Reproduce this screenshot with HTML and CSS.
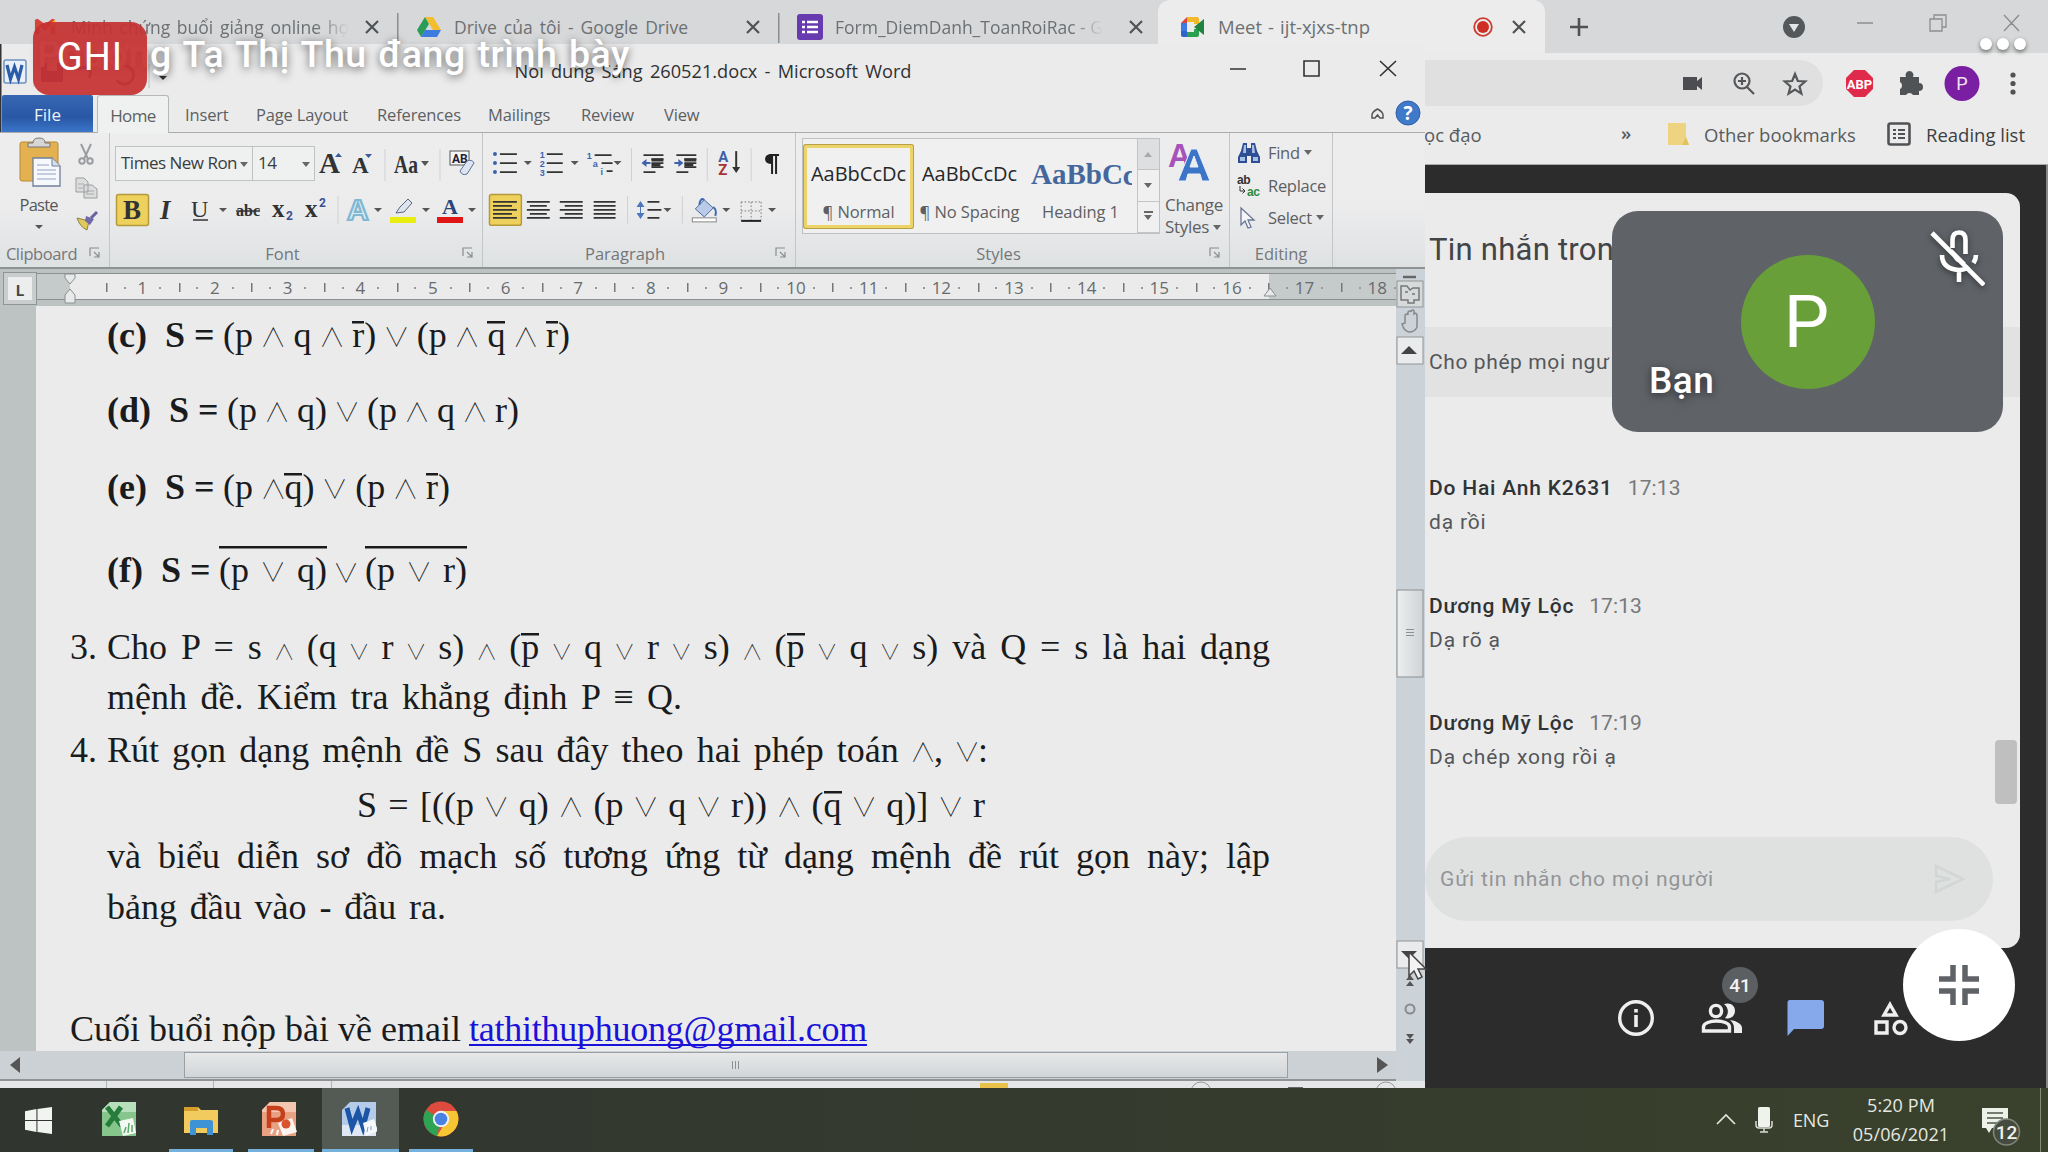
FILE: index.html
```html
<!DOCTYPE html>
<html lang="vi">
<head>
<meta charset="utf-8">
<title>Meet</title>
<link rel="stylesheet" href="styles.css">
</head>
<body>
<div class="desktop">

<section class="chrome">
  <header class="tabs">
    <div class="tab t1">
      <svg class="fav" viewBox="0 0 24 24"><path d="M1 4v16h5V11l6 5 6-5v9h5V4l-3-1-8 6-8-6z" fill="#d5453a"/><path d="M18 8l5-4v5l-5 4z" fill="#f4b92a"/></svg>
      <span class="j w278 fade">Minh chứng buổi giảng online họ</span>
      <svg class="x" viewBox="0 0 14 14"><path d="M1 1l12 12M13 1L1 13"/></svg>
    </div>
    <div class="tab t2">
      <svg class="fav" viewBox="0 0 24 22"><path d="M8 1h8l8 13h-8z" fill="#f3bd2d"/><path d="M8 1l4 7-8 13-4-7z" fill="#2b9b58"/><path d="M8 14h16l-4 7H4z" fill="#3d7be0"/></svg>
      <span class="j w234">Drive của tôi - Google Drive</span>
      <svg class="x" viewBox="0 0 14 14"><path d="M1 1l12 12M13 1L1 13"/></svg>
    </div>
    <div class="tab t3">
      <svg class="fav form" viewBox="0 0 26 26"><rect width="26" height="26" rx="3" fill="#673ab0"/><path d="M10 8h11M10 13h11M10 18h11M5 8h3M5 13h3M5 18h3" stroke="#fff" stroke-width="2.6"/></svg>
      <span class="j w276 fade">Form_DiemDanh_ToanRoiRac - G</span>
      <svg class="x" viewBox="0 0 14 14"><path d="M1 1l12 12M13 1L1 13"/></svg>
    </div>
    <div class="tab active">
      <svg class="fav" viewBox="0 0 24 20"><path d="M0 6l6-6v6z" fill="#dc4437"/><path d="M0 6h6v9H0z" fill="#3d7be0"/><path d="M0 14h6v6H2q-2 0-2-2z" fill="#2f64c8"/><path d="M6 0h10q2 0 2 2v5h-5V5H6z" fill="#f2b92a"/><path d="M6 15h7v-3h5v6q0 2-2 2H6z" fill="#2ba04e"/><path d="M13 10l10-8v16z" fill="#1e8440"/></svg>
      <span class="j w152">Meet - ijt-xjxs-tnp</span>
      <svg class="rec" viewBox="0 0 20 20"><circle cx="10" cy="10" r="8.8" fill="none" stroke="#cf3a31" stroke-width="1.8"/><circle cx="10" cy="10" r="6" fill="#cf2e25"/></svg>
      <svg class="x" viewBox="0 0 14 14"><path d="M1 1l12 12M13 1L1 13"/></svg>
    </div>
    <svg class="winctl" viewBox="1545 0 503 53">
      <path d="M1570 27h18M1579 18v18" stroke="#505254" stroke-width="2.6"/>
      <circle cx="1794" cy="27" r="11" fill="#54585a"/><path d="M1789 24h10l-5 8z" fill="#e4e6e6"/>
      <g fill="none" stroke="#8b8e90" stroke-width="1.3"><path d="M1857 23h16M2004 15l15 16M2019 15l-15 16M1930 19h12v12h-12zM1934 19v-4h12v12h-4"/></g>
    </svg>
  </header>
  <div class="toolbar">
    <div class="omni">
      <svg viewBox="1675 60 148 46" width="148" height="46"><path d="M1683 77h14v4l5-4v13l-5-4v4h-14z" fill="#4b4d50"/><g fill="none" stroke="#55585a" stroke-width="2.2"><circle cx="1742" cy="81" r="7.5"/><path d="M1747 87l7 7M1738 81h8M1742 77v8M1795 74l2.8 7 7.4.5-5.7 4.8 1.9 7.3-6.4-4-6.4 4 1.9-7.3-5.7-4.8 7.4-.5z"/></g></svg>
    </div>
    <svg class="ext" viewBox="1823 60 225 46"><path d="M1854 70h11l8 8v11l-8 8h-11l-8-8V78z" fill="#e02a4c"/><text x="1859.500" y="88.500" class="abp" text-anchor="middle">ABP</text>
      <path d="M1900 77h6a4 4 0 1 1 7 0h6v6a4 4 0 1 1 0 8v4h-6a4 4 0 0 0-7 0h-6v-6a4 4 0 0 0 0-7z" fill="#505356"/>
      <circle cx="1962" cy="83.500" r="17.500" fill="#7b1fa2"/><text x="1962" y="90" class="av" text-anchor="middle">P</text>
      <g fill="#505356"><circle cx="2013" cy="75" r="2.600"/><circle cx="2013" cy="83.500" r="2.600"/><circle cx="2013" cy="92" r="2.600"/></g></svg>
  </div>
  <div class="bookmarks">
    <span class="j w56">ọc đạo</span><b class="more">»</b><i></i>
    <svg width="22" height="24" viewBox="0 0 22 24"><path d="M1 1h18v14l3 8H1z" fill="#eed481"/><path d="M19 15l3 8h-7z" fill="#e2c25c"/></svg>
    <span class="j w147">Other bookmarks</span><i></i>
    <svg width="24" height="24" viewBox="0 0 24 24"><rect x="1.500" y="1.500" width="21" height="21" rx="2" fill="none" stroke="#505356" stroke-width="2.600"/><path d="M6 8h3M6 12h3M6 16h3M11 8h7M11 12h7M11 16h7" stroke="#505356" stroke-width="2"/></svg>
    <span class="j w98 dark">Reading list</span>
  </div>
  <div class="meet">
    <aside class="chat">
      <h2>Tin nhắn tron</h2>
      <div class="allow">Cho phép mọi ngư</div>
      <div class="msgs">
        <article><p><b>Do Hai Anh K2631</b><time>17:13</time></p><p>dạ rồi</p></article>
        <article><p><b>Dương Mỹ Lộc</b><time>17:13</time></p><p>Dạ rõ ạ</p></article>
        <article><p><b>Dương Mỹ Lộc</b><time>17:19</time></p><p>Dạ chép xong rồi ạ</p></article>
        <div class="thumb"></div>
      </div>
      <div class="send"><span>Gửi tin nhắn cho mọi người</span>
        <svg width="32" height="30" viewBox="0 0 32 30"><path d="M2 2l27 13L2 28V18l14-3-14-3z" fill="none" stroke="#d3d6d6" stroke-width="2.500"/></svg></div>
    </aside>
    <footer class="actions">
      <svg viewBox="1425 960 560 100" width="560" height="100">
        <circle cx="1636" cy="1018" r="16.300" fill="none" stroke="#efefef" stroke-width="3.400"/><path d="M1636 1015v12M1636 1009v3.500" stroke="#efefef" stroke-width="3.600"/>
        <g fill="none" stroke="#efefef" stroke-width="3.400"><circle cx="1716" cy="1011" r="5.600"/><path d="M1703.500 1031v-4c0-4 7-6 13-6s13 2 13 6v4z"/></g><path d="M1724 1004c7-2 11 2 11 7s-5 9-10 7c4-4 4-10-1-14zM1730 1020c7 1 12 4 12 8v5h-8v-5c0-4-2-6-4-8z" fill="#efefef"/>
        <circle cx="1740" cy="985" r="18" fill="#5c5f61"/><text x="1740" y="992" class="cnt" text-anchor="middle">41</text>
        <path d="M1790 1000h31q3 0 3 3v23q0 3-3 3h-27l-6.500 7v-33q0-3 2.500-3z" fill="#85a9ea"/>
        <g fill="none" stroke="#efefef" stroke-width="3.400"><path d="M1890 1004.500l6 10.500h-12zM1876 1022h11v11h-11z"/><circle cx="1900" cy="1027.500" r="6"/></g>
      </svg>
    </footer>
  </div>
</section>

<section class="word">
  <header class="title">
    <svg viewBox="0 44 514 51" width="514" height="51">
      <rect x="4" y="60" width="22" height="23" rx="2" fill="#e9f0f8" stroke="#6d91c0" stroke-width="1.500"/><path d="M7 65l3.500 14 4-12 4 12L22 65" fill="none" stroke="#2a5ca8" stroke-width="3.200"/>
      <path d="M34 60v27M149 64v24" stroke="#b9bcbf"/><path d="M41 63h22v19H41zM47 63v8h10v-8" fill="#4c3f7d"/><path d="M78 70c6-6 16-1 11 8M125 66a9 9 0 1 1-8 14" fill="none" stroke="#51609a" stroke-width="3"/><path d="M159 76h8l-4 4z" fill="#333"/>
    </svg>
    <h1 class="j w397">Noi dung Sáng 260521.docx - Microsoft Word</h1>
    <svg class="ctl" viewBox="1216 44 209 51" width="209" height="51"><path d="M1230 69h16M1304 61h15v15h-15zM1380 61l16 15M1396 61l-16 15" fill="none" stroke="#333" stroke-width="1.600"/></svg>
  </header>
  <nav class="menu">
    <b>File</b><span class="home">Home</span><span>Insert</span><span>Page Layout</span><span>References</span><span>Mailings</span><span>Review</span><span>View</span>
    <svg viewBox="1365 95 60 38" width="60" height="38"><path d="M1372 115q0-3 5.500-6 5.500 3 5.500 6v3h-3l-2.500-3-2.500 3h-3z" fill="none" stroke="#555" stroke-width="1.500"/><circle cx="1408" cy="113" r="12" fill="#3f79c9" stroke="#2d5fa8"/><text x="1408" y="120" class="q" text-anchor="middle">?</text></svg>
  </nav>
  <div class="ribbon">
    <div class="grp clip">
      <svg class="tools" viewBox="0 134 109 104"><rect x="20" y="143" width="38" height="39" rx="2" fill="#e3b150" stroke="#b98a35"/><path d="M28 148v-4h5q0-5 6-5t6 5h5v4z" fill="#d6d6d6" stroke="#777"/><path d="M33 159h19l8 8v20H33z" fill="#f6f8fb" stroke="#6f7f9c" stroke-width="1.300"/><path d="M37 166h12M37 171h19M37 175h19M37 180h19" stroke="#91a3c4"/><path d="M52 159v8h8" fill="#d5dfee" stroke="#6f7f9c"/>
        <g fill="none" stroke="#9a9da0" stroke-width="2"><path d="M81 145l7 15M91 145l-7 15"/><circle cx="82" cy="162" r="2.700"/><circle cx="90" cy="162" r="2.700"/></g>
        <path d="M76 179h8l4 4v10H76zM84 186h8l5 4v9H84z" fill="#dcdddd" stroke="#9a9da0"/><path d="M78 185h6M78 189h5M86 192h8M86 195h8" stroke="#aaa"/>
        <path d="M77 219l12 3-2 9q-7-3-10-12z" fill="#dfc95c" stroke="#8d8243"/><path d="M86 217l8 3-4 6-5-4z" fill="#706aa8"/><path d="M91 219l6-6" stroke="#69639a" stroke-width="3"/>
        <text x="39" y="212" class="ui" text-anchor="middle" textLength="39">Paste</text><path d="M35 226h8l-4 4z" fill="#555"/></svg>
      <label>Clipboard<svg viewBox="0 0 12 12"><path d="M1 9V1h9M5 5l5 5M10 5v5H5"/></svg></label>
    </div>
    <div class="grp font">
      <div class="row r1">
        <div class="combo name">Times New Ron<i></i></div><div class="combo size">14<i></i></div>
        <svg viewBox="315 145 167 38" width="167" height="38"><g class="sf"><text x="319" y="173" font-size="29">A</text><text x="352" y="173" font-size="23">A</text><text x="394" y="173" font-size="25" textLength="24" lengthAdjust="spacingAndGlyphs">Aa</text></g><path d="M335 157h7l-3.500-4zM365 154h7l-3.500 4z" fill="#3b5a9a"/><path d="M421 161h8l-4 5z" fill="#555"/><path d="M385 149v32M440 149v32" stroke="#cfd1d3"/><rect x="450" y="151" width="19" height="14" fill="#f5f6f8" stroke="#555"/><text x="452" y="163" font-size="12" font-family="Roboto" font-weight="700" fill="#223">AB</text><path d="M460 171l7-10q5-2 7 2l-7 11q-5 2-7-3z" fill="#dde5f1" stroke="#5a6f98"/></svg>
      </div>
      <svg class="r2" viewBox="109 189 373 44"><rect x="115.500" y="194.500" width="32" height="31" rx="2" fill="#eed15c" stroke="#b59a3d" stroke-width="1.500"/>
        <g class="sf"><text x="122" y="219" font-size="27">B</text><text x="159" y="219" font-size="27" font-style="italic">I</text><text x="190" y="217" font-size="24" font-weight="400">U</text><text x="235" y="216" font-size="17" textLength="24" lengthAdjust="spacingAndGlyphs">abc</text><text x="271" y="217" font-size="25">x</text><text x="304" y="217" font-size="25">x</text></g><path d="M192 220h15M235 211h24" stroke="#333" stroke-width="1.600"/>
        <g font-family="Roboto" font-size="12" font-weight="700" fill="#37508f"><text x="285" y="220">2</text><text x="318" y="207">2</text></g>
        <path d="M218 208h8l-4 4zM373 208h8l-4 4zM421 208h8l-4 4zM467 208h8l-4 4z" fill="#555"/><path d="M337 196v28" stroke="#cfd1d3"/>
        <text x="346" y="220" font-size="30" font-family="Liberation Sans" font-weight="700" fill="#dcecf4" stroke="#7fb8d2" stroke-width="2.200">A</text>
        <path d="M395 213l4-6 8-8 4 4-8 9z" fill="#dfe4ec" stroke="#55648a"/><rect x="389" y="217" width="26" height="6" fill="#e9ee10"/><text x="441" y="214" font-size="22" font-family="Liberation Serif" font-weight="700" fill="#2c4579">A</text><rect x="436" y="217" width="26" height="6" fill="#e01515"/></svg>
      <label>Font<svg viewBox="0 0 12 12"><path d="M1 9V1h9M5 5l5 5M10 5v5H5"/></svg></label>
    </div>
    <div class="grp para">
      <svg class="tools" viewBox="483 133 313 104">
        <g stroke="#333" stroke-width="1.700" fill="none"><path d="M500 154h17M500 163h17M500 172h17M547 154h16M547 163h16M547 172h16M595 155h17M602 163h11M607 171h6"/><path d="M644 155h20M652 159h12M652 163h12M652 167h12M644 172h12M677 155h20M685 159h12M685 163h12M685 167h12M677 172h12" /><path d="M652 160h12M652 165h9M685 160h12M685 165h9" stroke-width="3"/></g>
        <g fill="#3d62ad"><circle cx="495" cy="154" r="2"/><circle cx="495" cy="163" r="2"/><circle cx="495" cy="172" r="2"/><path d="M642 163l5-4v3h4v2h-4v3zM684 163l-5-4v3h-4v2h4v3z"/></g>
        <g class="num"><text x="540" y="158">1</text><text x="540" y="167">2</text><text x="540" y="176">3</text><text x="587" y="159">1</text><text x="593" y="167">a</text><text x="601" y="175">i</text></g>
        <path d="M524 161h8l-4 4zM571 161h8l-4 4zM614 161h8l-4 4zM664 208h8l-4 4zM723 208h8l-4 4zM769 208h8l-4 4z" fill="#555"/>
        <path d="M632 148v33M708 148v33M752 148v33M628 196v28M683 196v28" stroke="#cfd1d3"/>
        <g font-family="Roboto" font-weight="700" font-size="15"><text x="719" y="162" fill="#3d5fa8">A</text><text x="719" y="175" fill="#a83232">Z</text></g><path d="M737 151v18" stroke="#333" stroke-width="2"/><path d="M733 167h8l-4 6z" fill="#333"/>
        <path d="M772 154h8v2h-2v18h-2v-18h-2v18h-2v-10c-8 0-8-10 0-10z" fill="#222"/>
        <rect x="489.500" y="194.500" width="32" height="31" rx="2" fill="#eed15c" stroke="#b59a3d" stroke-width="1.500"/>
        <path d="M493 202h24M493 206h19M493 210h24M493 214h19M493 218h24M527 202h23M530 206h17M527 210h23M530 214h17M527 218h23M560 202h23M565 206h18M560 210h23M565 214h18M560 218h23M594 202h22M594 206h22M594 210h22M594 214h22M594 218h22M648 202h12M648 210h14M648 218h12" stroke="#333" stroke-width="1.700"/>
        <path d="M637 207l4-6 4 6zM637 213l4 6 4-6z" fill="#4d77bd"/><path d="M641 205v11" stroke="#4d77bd"/>
        <path d="M696 209l9-9 9 8-9 9z" fill="#b9cbe6" stroke="#4c6b9f"/><path d="M700 205q1-8 5-5M714 207q4 3 2 9" fill="none" stroke="#3f6aae" stroke-width="2"/><rect x="693" y="218" width="24" height="4" fill="#fff" stroke="#888"/>
        <path d="M742 202h20M742 211h20M742 202v18M752 202v18M762 202v18" stroke="#777" stroke-dasharray="1.500 2"/><path d="M742 221h20" stroke="#222" stroke-width="2"/>
      </svg>
      <label>Paragraph<svg viewBox="0 0 12 12"><path d="M1 9V1h9M5 5l5 5M10 5v5H5"/></svg></label>
    </div>
    <div class="grp styles">
      <div class="row r0">
        <div class="gallery">
          <div class="st on"><em>AaBbCcDc</em><span>¶ Normal</span></div>
          <div class="st"><em>AaBbCcDc</em><span>¶ No Spacing</span></div>
          <div class="st hd"><em>AaBbC<small>c</small></em><span>Heading 1</span></div>
          <div class="gs"><i class="dis"></i><i></i><i class="bar"></i></div>
        </div>
        <div class="change">
          <svg viewBox="1168 140 48 46" width="48" height="46"><g font-family="Liberation Sans" font-weight="700"><text x="1171" y="168" font-size="34" fill="#a752b8" textLength="23" lengthAdjust="spacingAndGlyphs">A</text><path d="M1181 182l13-32h6l13 32h-8l-2-7h-12l-2 7zM1193 168h8l-4-11z" fill="#3c74c8" stroke="#eaf0fa" fill-rule="evenodd"/></g></svg>
          <span>Change</span><span>Styles<i></i></span>
        </div>
      </div>
      <label>Styles<svg viewBox="0 0 12 12"><path d="M1 9V1h9M5 5l5 5M10 5v5H5"/></svg></label>
    </div>
    <div class="grp edit">
      <ul>
        <li><svg viewBox="0 0 26 24"><path d="M7 2h4v5h4V2h4l2 8 3 6v6h-9v-7h-4v7H2v-6l3-6z" fill="#2e4f93"/><path d="M4 16h5v4H4zM17 16h5v4h-5zM8 4h2v8H7zM16 4h2l1 8h-3z" fill="#a9c0e6"/></svg>Find<i></i></li>
        <li><svg viewBox="0 0 26 24"><text x="1" y="10" class="rp" fill="#333">ab</text><text x="11" y="22" class="rp" fill="#2e8b40">ac</text><path d="M4 12v5h5M6.500 14.500L9 17l-2.500 2.500" fill="none" stroke="#333"/></svg>Replace</li>
        <li><svg viewBox="0 0 26 24"><path d="M5 2v17l4-4 3 7 3-1-3-7h6z" fill="#f4f6fa" stroke="#6a7896" stroke-width="1.300"/></svg>Select<i></i></li>
      </ul>
      <label>Editing</label>
    </div>
  </div>
  <div class="work">
    <div class="left">
      <div class="ruler">
        <div class="tabsel">L</div>
        <div class="scale"><div class="nums"><span>1</span><span>2</span><span>3</span><span>4</span><span>5</span><span>6</span><span>7</span><span>8</span><span>9</span><span>10</span><span>11</span><span>12</span><span>13</span><span>14</span><span>15</span><span>16</span><span>17</span><span>18</span></div>
        <svg class="marks" viewBox="0 268 1396 38"><path d="M65 275h10v4l-5 6-5-6zM65 296l5-6 5 6v8H65zM1264 297l6-8 6 8z" fill="#e8e9e9" stroke="#8b8f90"/></svg></div>
      </div>
      <main class="doc"><div class="page">
        <p class="l1 eq"><b class="lab">(c)</b><b class="j sx">S =</b><span class="j f1">(p <u>∧</u> q <u>∧</u> <s>r</s>) <u>∨</u> (p <u>∧</u> <s>q</s> <u>∧</u> <s>r</s>)</span></p>
        <p class="l2 eq"><b class="lab">(d)</b><b class="j sx">S =</b><span class="j f2">(p <u>∧</u> q) <u>∨</u> (p <u>∧</u> q <u>∧</u> r)</span></p>
        <p class="l3 eq"><b class="lab">(e)</b><b class="j sx">S =</b><span class="j f3">(p <u>∧</u><s>q</s>) <u>∨</u> (p <u>∧</u> <s>r</s>)</span></p>
        <p class="l4 eq"><b class="lab">(f)</b><b class="j sx">S =</b><span class="j f4a big">(p <u>∨</u> q)</span><u>∨</u><span class="j f4b big">(p <u>∨</u> r)</span></p>
        <p class="l5 it"><span class="no">3.</span><span class="j full sm">Cho P = s <u>∧</u> (q <u>∨</u> r <u>∨</u> s) <u>∧</u> (<s>p</s> <u>∨</u> q <u>∨</u> r <u>∨</u> s) <u>∧</u> (<s>p</s> <u>∨</u> q <u>∨</u> s) và Q = s là hai dạng</span></p>
        <p class="l6 in j">mệnh đề. Kiểm tra khẳng định P ≡ Q.</p>
        <p class="l7 it"><span class="no">4.</span><span class="j f7">Rút gọn dạng mệnh đề S sau đây theo hai phép toán <u>∧</u>, <u>∨</u>:</span></p>
        <p class="l8 j">S = [((p <u>∨</u> q) <u>∧</u> (p <u>∨</u> q <u>∨</u> r)) <u>∧</u> (<s>q</s> <u>∨</u> q)] <u>∨</u> r</p>
        <p class="l9 in j full">và biểu diễn sơ đồ mạch số tương ứng từ dạng mệnh đề rút gọn này; lập</p>
        <p class="l10 in j">bảng đầu vào - đầu ra.</p>
        <p class="l11"><span class="j f11">Cuối buổi nộp bài về email</span><a>tathithuphuong@gmail.com</a></p>
      </div></main>
      <div class="hscroll"><i class="la"></i><div class="ht"><i></i></div><i class="ra"></i></div>
    </div>
    <svg class="vscroll" viewBox="1396 268 29 813" width="29" height="813"><defs><linearGradient id="tg"><stop offset="0" stop-color="#eceeef"/><stop offset="1" stop-color="#d0d4d7"/></linearGradient></defs>
      <path d="M1403 276h13" stroke="#666" stroke-width="2.500"/><rect x="1397" y="280" width="26" height="26" fill="#d6dada" stroke="#8f9495"/><path d="M1401 285h6l3 4 3-2h6v12h-5v3h-6v-3h-7zM1405 291h3M1412 293h3" fill="none" stroke="#777" stroke-width="1.500"/>
      <path d="M1402 323l3-1v-8q2-2 3 0v-3q2-2 3 0v-1q2-2 3 0v3q2-2 3 1v12q-2 5-8 5-5-1-7-8z" fill="none" stroke="#888" stroke-width="1.500"/>
      <rect x="1397" y="336" width="26" height="27" fill="#eaebec" stroke="#8f9495"/><path d="M1401 353h16l-8-8z" fill="#444"/>
      <rect x="1397" y="589" width="26" height="87" fill="url(#tg)" stroke="#8b9092"/><path d="M1406 628.500h8M1406 631.500h8M1406 634.500h8" stroke="#8b9092"/>
      <rect x="1397" y="940" width="26" height="27" fill="#eaebec" stroke="#8f9495"/><path d="M1401 950h16l-8 8z" fill="#444"/>
      <path d="M1406 979l4-5 4 5zM1406 985l4-5 4 5zM1406 1033h8l-4 5zM1406 1038h8l-4 5z" fill="#555"/><circle cx="1410" cy="1008" r="4.500" fill="none" stroke="#858a8c" stroke-width="2"/></svg>
  </div>
  <div class="status"><i></i><i></i><i></i><svg viewBox="332 1081 1093 7"><rect x="980" y="1083" width="28" height="6" fill="#e8c24a"/><rect x="1288" y="1087" width="15" height="2" fill="#666"/><g fill="none" stroke="#999"><circle cx="1201" cy="1092" r="10"/><circle cx="1386" cy="1092" r="10"/></g></svg></div>
</section>

<footer class="taskbar">
  <div class="app start"><svg viewBox="0 0 26 26"><path d="M0 4l11-2v10.500H0zM12 2l14-2v12.500H12zM0 13.500h11V24L0 22zM12 13.500h14V26l-14-2z" fill="#f2f4f1"/></svg></div>
  <div class="app a1"><svg viewBox="0 0 36 36"><path d="M9 1h26v34H1V9z" fill="#86c68d"/><path d="M9 1h26v10H1V9z" fill="#b8dfbb"/><path d="M6 6l15 19M20 6L6 25" stroke="#257c3b" stroke-width="5"/><path d="M18 20l14-3 3 15-13 3z" fill="#f4f8f3"/><path d="M23 32l2-6M27 32l1-10M31 31v-7" stroke="#5da868" stroke-width="1.500"/></svg></div>
  <div class="app a2 run"><svg viewBox="0 0 36 36"><path d="M1 6h14l3 3h17v23H1z" fill="#f1cb5d"/><path d="M1 6h14v4H1z" fill="#d49d2c"/><path d="M7 21q0-2 2-2h18q3 0 3 2v13h-6v-7H13v7H7z" fill="#3e93d6"/></svg></div>
  <div class="app a3 run"><svg viewBox="0 0 36 36"><path d="M9 1h26v34H1V9z" fill="#e9a184"/><path d="M9 1h26v10H1V9z" fill="#f2c6b1"/><path d="M8 27V7h7q7 0 7 6t-7 6h-6" fill="none" stroke="#c5401b" stroke-width="4.500"/><path d="M17 22l14-5 5 14-14 4z" fill="#fbf3ef"/><circle cx="25" cy="23" r="4.500" fill="#d9532c"/><path d="M10 33l2-5M16 34l1-5M22 33l1-3" stroke="#fff" stroke-width="2"/></svg></div>
  <div class="app a4 run on"><svg viewBox="0 0 36 36"><path d="M9 1h26v34H1V9z" fill="#b4cbea"/><path d="M1 24h34v11H1z" fill="#dfe8f4"/><path d="M6 7l5 19 6-15 5 15 5-19" fill="none" stroke="#1d55a6" stroke-width="5"/><path d="M22 22l11-4 4 12-12 5z" fill="#f6f9fc"/><path d="M26 31l1-5M30 29v-4" stroke="#7c9cc9"/></svg></div>
  <div class="app a5 run"><svg viewBox="0 0 36 36"><circle cx="18" cy="18" r="17.500" fill="#dd4b3e"/><path d="M18 18L3 9a17.500 17.500 0 0 0 11 26z" fill="#2ea353"/><path d="M18 35.500A17.500 17.500 0 0 0 33.500 10H18l4 12-8 13z" fill="#f6c733"/><circle cx="18" cy="18" r="8.200" fill="#f4f4f4"/><circle cx="18" cy="18" r="6.300" fill="#4a82e4"/></svg></div>
  <div class="tray">
    <svg viewBox="1710 1088 70 64" width="70" height="64"><path d="M1717 1124l9-9 9 9" fill="none" stroke="#e2e5dc" stroke-width="1.700"/><rect x="1758" y="1107" width="12" height="20" rx="1.500" fill="#f0f2ec"/><path d="M1756 1121v4q0 3 3 3h10q3 0 3-3v-4M1764 1128v4M1760 1132h8" fill="none" stroke="#d8dbd2" stroke-width="1.500"/></svg>
    <span class="eng">ENG</span>
    <div class="clock"><span>5:20 PM</span><span>05/06/2021</span></div>
    <svg class="nt" viewBox="1964 1088 84 64" width="84" height="64"><path d="M1982 1108h26v20h-16l-3 5-3-5h-4z" fill="#eef0ea"/><path d="M1987 1113h16M1987 1118h16M1987 1123h12" stroke="#4d5545" stroke-width="1.600"/><circle cx="2006.500" cy="1132" r="13" fill="#454b3e" stroke="#7f8578" stroke-width="1.600"/><text x="2006.500" y="1139" class="bdg" text-anchor="middle">12</text><path d="M2040.500 1088v64" stroke="#858a7d"/></svg>
  </div>
</footer>

<svg class="cursor" viewBox="0 0 20 30"><path d="M1 1v24l5-5 4 8 4-2-4-8h8z" fill="#f3f3f3" stroke="#444" stroke-width="1.500"/></svg>
<div class="presenter j">Phương Tạ Thị Thu đang trình bày</div>
<div class="recbadge">GHI</div>
<div class="dots"><i></i><i></i><i></i></div>
<div class="tile"><div class="avatar">P</div><span>Bạn</span>
  <svg viewBox="0 0 56 58"><g fill="none" stroke="#fff" stroke-width="4.600"><path d="M23.500 20V12q0-7.500 6.500-7.500t6.500 7.500v14"/><path d="M13 27q0 14 17 15 6 0 10-3M47 27q0 4-2.500 8M30 42v12"/><path d="M3 5l52 52"/></g><path d="M23 21l14 14q-14 2-14-14z" fill="#fff"/></svg></div>
<button class="fab"><svg viewBox="0 0 40 40"><path d="M14 0v14H0M26 0v14h14M14 40V26H0M26 40V26h14" fill="none" stroke="#5f6368" stroke-width="5.500"/></svg></button>
</div>
</body>
</html>
```
FILE: styles.css
```css
*{box-sizing:border-box}
body{margin:0;background:#2c2c2c;font-family:"Open Sans","Noto Sans",sans-serif;overflow:hidden}
h1,h2,p,ul{margin:0;padding:0;font-weight:400;list-style:none}
svg{display:block;flex:none}
.desktop{position:relative;width:2048px;height:1152px;overflow:hidden}
.j{display:block;white-space:nowrap;text-align-last:justify;flex:none}
.w278{width:278px}.w234{width:234px}.w276{width:268px}.w152{width:152px}.w397{width:397px}
.w56{width:56px}.w147{width:147px}.w98{width:98px}
.fade{overflow:hidden;-webkit-mask-image:linear-gradient(90deg,#000 88%,transparent);mask-image:linear-gradient(90deg,#000 88%,transparent)}

/* browser window */
.chrome{position:absolute;inset:0 0 64px 0;display:flex;flex-direction:column;background:#ebebeb;font-size:17.500px}
.tabs{height:53px;display:flex;background:#d6d8d9;color:#6d7073}
.tab{display:flex;align-items:center;height:53px}
.fav{width:24px;height:22px}
.form{width:26px;height:26px}
.x{width:14px;height:14px}
.x path{stroke:#505356;stroke-width:2.2;fill:none}
.t1{width:397px;padding-left:33px;gap:14px}
.t1 .x{margin-left:2px}
.t2{width:381px;padding-left:20px;gap:13px;background:linear-gradient(#8b8e90,#8b8e90) 0 13px/1.5px 30px no-repeat}
.t2 .x{margin-left:45px}
.t3{width:380px;padding-left:19px;gap:12px;background:linear-gradient(#8b8e90,#8b8e90) 0 13px/1.5px 30px no-repeat}
.t3 .x{margin-left:14px}
.active{width:387px;padding-left:23px;gap:13px;background:#ebeceb;border-radius:12px 12px 0 0}
.active .j{font-size:18.500px}
.rec{width:20px;height:20px;margin-left:90px}
.active .x{margin-left:6px}
.winctl{width:503px;height:53px}
.toolbar{height:57px;display:flex;padding:7px 0 4px 1423px}
.omni{width:400px;background:#e0e0e0;border-radius:0 23px 23px 0;display:flex;justify-content:flex-end}
.ext{width:225px;height:46px}
.abp{font:700 13px Roboto,sans-serif;fill:#fff}
.av{font:18px Roboto,sans-serif;fill:#f1e5f5}
.bookmarks{height:55px;display:flex;align-items:center;padding:0 24px 6px 1424px;color:#585b5e;border-bottom:1.5px solid #a8abac;font-size:18.500px}
.bookmarks i{width:1px;height:25px;background:#bfc1c2}
.bookmarks .more{margin:0 18px 4px 141px;width:10px;font-weight:600}
.bookmarks svg{margin-left:18px}
.bookmarks span+i{margin-left:18px}
.bookmarks svg+span{margin-left:15px}
.bookmarks .dark{color:#3c3f42}
.meet{flex:1;display:flex;flex-direction:column;padding:28px 26px 0 1425px;background:#2c2c2c;border-right:2px solid #888}
.chat{height:755px;background:#ebebeb;border-radius:0 14px 14px 0;display:flex;flex-direction:column;font-family:Roboto,sans-serif;color:#54575a}
.chat h2{font-size:31px;line-height:40px;padding:37px 0 0 4px;height:134px;color:#424548;letter-spacing:.25px}
.allow{height:70px;background:#e2e2e2;line-height:70px;padding-left:4px;font-size:21px;letter-spacing:.6px}
.msgs{flex:1;position:relative;padding:74px 0 0 4px}
.msgs article{height:117.500px;font-size:21px;line-height:34px;letter-spacing:.85px}
.msgs p{display:flex}
.msgs b{font-weight:500;color:#303336;letter-spacing:.8px}
.msgs time{margin-left:15px;color:#77797b;letter-spacing:.1px}
.thumb{position:absolute;right:3px;top:343px;width:22px;height:64px;background:#bfbfbf;border-radius:4px}
.send{height:84px;margin:0 27px 27px 0;border-radius:42px;background:#dfe0e0;display:flex;align-items:center;justify-content:space-between;padding:0 27px 0 15px;font-size:21px;color:#929597;letter-spacing:.85px}
.actions{flex:1;padding-top:12px}
.cnt{font:500 19px Roboto,sans-serif;fill:#f3f3f3}

/* word window */
.word{position:absolute;left:0;top:44px;width:1425px;height:1044px;background:#ebebec;display:flex;flex-direction:column;font-size:17px;color:#5d6062;box-shadow:inset 1.5px 0 #333}
.title{height:51px;display:flex;align-items:center;justify-content:space-between}
.title h1{font-size:18.200px;color:#2f3133;padding-top:2px;margin-right:304px}
.menu{height:38px;display:flex;border-bottom:1px solid #a9acae;line-height:39px;padding-left:2px}
.menu b{width:91px;background:linear-gradient(#3767b3,#2957a6 60%,#3b76c8);color:#eef3fa;text-align:center;font-weight:400;border-radius:2px 2px 0 0}
.menu span{width:72px}
.menu .home{width:72px;margin:0 16px 0 4px;background:#eff0f0;border:1px solid #b5b8ba;border-bottom:0;height:38px;text-align:center;border-radius:3px 3px 0 0;letter-spacing:-.6px}
.menu span:nth-child(n+3){font-size:16.500px;letter-spacing:-.15px}
.menu span:nth-child(3){width:71px}.menu span:nth-child(4){width:121px}.menu span:nth-child(5){width:111px}.menu span:nth-child(6){width:93px}.menu span:nth-child(7){width:83px}
.menu svg{margin-left:auto}
.q{font:700 19px "Open Sans",sans-serif;fill:#fff}
.ribbon{height:136px;display:flex;background:linear-gradient(#ededee,#ececed 55%,#dee1e2);border-bottom:2px solid #8e9293}
.grp{height:134px;border-right:1px solid #c3c6c8;display:flex;flex-direction:column}
.grp label{margin-top:auto;height:25px;display:flex;align-items:center;justify-content:center;font-size:16.500px;color:#74777a;position:relative;padding-bottom:2px;line-height:22px}
.grp label svg{position:absolute;right:8px;top:5px;width:12px;height:12px}
.grp label svg path{fill:none;stroke:#8a8d90;stroke-width:1.200}
.clip{width:110px}.font{width:373px}.para{width:313px}.styles{width:434px}.edit{width:103px}
.clip label{padding-right:26px;letter-spacing:-.4px}
.font label{padding-right:27px}.para label{padding-right:28px}.styles label{padding-right:28px}
.tools{width:100%;height:104px}
.ui{font:16.500px "Open Sans",sans-serif;fill:#55585a}
.sf{font-family:"Liberation Serif",serif;font-weight:700;fill:#303234}
.num{font:700 9px "Liberation Sans",sans-serif;fill:#3d62ad}
.row{display:flex}
.r1{padding:12px 0 0 5px;height:56px}
.r2{width:373px;height:44px}
.combo{height:35px;border:1px solid #bfc2c4;line-height:32px;color:#3b3d3f;font-size:17px;margin-top:1px;padding-left:5px;background:#eff0f0;position:relative;overflow:hidden;white-space:nowrap;letter-spacing:-.5px}
.name{width:138px}.size{width:62px;border-left:0}
.combo i{position:absolute;right:0;top:0;width:15px;height:33px}
i{font-style:normal}
.combo i::after,.change i::after,.edit i::after,.gs i::after{content:"";position:absolute;left:3px;top:15px;border:4px solid transparent;border-top:5px solid #666;border-bottom:0}
.change i,.edit i{position:relative;display:inline-block;width:14px;height:0}
.change i::after,.edit i::after{top:-8px;left:4px}
.r0{padding:5px 0 0 6px;height:104px}
.gallery{width:358px;height:96px;border:1px solid #bfc2c4;display:flex;background:#f0f0f1}
.st{width:111px;height:85px;margin-top:5px;text-align:center;display:flex;flex-direction:column;font-size:16.500px}
.st em{font-style:normal;color:#26282a;height:51px;line-height:60px;font-size:20px;white-space:nowrap;letter-spacing:0}
.st span{line-height:34px;letter-spacing:-.1px;white-space:nowrap}
.on.st{box-shadow:inset 0 0 0 1px #b8a04a,inset 0 0 0 4px #edd468;border-radius:3px}
.hd em{font:700 29px/60px "Liberation Serif",serif;color:#44679c;width:97px;margin-left:6px;text-align:left;letter-spacing:0}
.hd small{display:inline-block;font-size:29px;line-height:34px;width:9px;overflow:hidden;vertical-align:bottom;height:46px}
.gs{margin-left:auto;width:22px;display:flex;flex-direction:column}
.gs i{flex:1;border:1px solid #c2c5c7;border-width:0 0 1px 1px;position:relative}
.gs i::after{left:6px;top:13px}
.gs .dis{background:#dddfe0}
.gs .dis::after{border-top:0;border-bottom:5px solid #aaa}
.gs .bar::before{content:"";position:absolute;left:6px;top:9px;width:9px;height:2px;background:#666}
.change{padding:1px 0 0 5px;width:66px;display:flex;flex-direction:column;line-height:22px;font-size:17px;letter-spacing:-.3px}
.change span:nth-child(2){margin-top:9px}
.change span{white-space:nowrap}
.edit ul{padding:4px 0 0 6px}
.edit li{height:32.500px;display:flex;align-items:center;font-size:16.500px;letter-spacing:-.3px;line-height:30px}
.edit li svg{width:26px;height:24px;margin-right:6px}
.edit li i{height:2px}
.edit li i::after{top:-2px}
.rp{font:700 12px "Liberation Sans",sans-serif}
.work{height:812px;display:flex}
.left{width:1396px;display:flex;flex-direction:column}
.vscroll{background:#ccd3d8}
.ruler{height:37px;display:flex;background:#bcc2c2;padding-left:2px}
.tabsel{flex:none;width:34px;height:33px;margin:3px 0 0 1px;border:1px solid #8f9495;background:#eceded;box-shadow:inset 0 0 0 4px #c9cdcd;color:#444;font:700 15px/36px Roboto,sans-serif;text-align:center}
.scale{flex:none;width:1359px;position:relative;height:27px;margin-top:4px;border:1px solid #8b8f90;border-width:1px 0;background:linear-gradient(90deg,#c5cacb 33px,#ebebeb 33px,#ebebeb 1232px,#c5cacb 1232px)}
.nums{display:flex;padding-left:69px;width:1359px;overflow:hidden}
.nums span{flex:0 0 72.650px;text-align:center;font-size:17px;line-height:27px;color:#686b6d;background:linear-gradient(#777,#777) 0 50%/1.500px 9px no-repeat,linear-gradient(#999,#999) 25% 50%/2px 2px no-repeat,linear-gradient(#999,#999) 75% 50%/2px 2px no-repeat}
.marks{position:absolute;left:-37px;top:-7px;width:1396px;height:38px}
.doc{height:745px;background:#bdc3c3;padding-left:36px}
.page{height:745px;background:#ebebeb;overflow:hidden;color:#1a1b1c;font:36px/40px "Liberation Serif","DejaVu Serif",serif;padding-top:9px}
.page p{height:40px;display:flex}
.page p.j{display:block}
.page u{font:100 26px/0 "Noto Sans CJK JP","DejaVu Sans",sans-serif;text-decoration:none;margin:0 -2px}
.page .sm u{font-size:21px}
.page s{text-decoration:none;background:linear-gradient(#1a1b1c,#1a1b1c) 0 6px/100% 2.500px no-repeat}
.page b{font-weight:700}
.eq{padding-left:71px}
.it{padding-left:34px}
.no{width:37px}
.in{margin-left:71px}
.full{width:1163px}
.lab{width:58px}.sx{width:49px;margin-right:9px}
.f1{width:347px}
.l2{margin-top:35px}.l2 .lab{width:62px}.f2{width:288px}
.l3{margin-top:37px}.f3{width:227px}
.l4{margin-top:43px}.l4 .lab{width:54px}.f4a{width:108px}.f4b{width:102px}
.page .l4>u{width:42px;text-align:center;line-height:43px}
.big{background:linear-gradient(#1a1b1c,#1a1b1c) 0 0/100% 2.500px no-repeat;margin-top:-4px;padding-top:4px}
.l5{margin-top:37px}
.page .l6{margin-top:10px;width:575px}
.l7{margin-top:13px}.f7{width:881px}
.page .l8{margin:15px 0 0 321px;width:628px}
.l9{margin-top:11px}
.page .l10{margin-top:11px;width:339px}
.l11{margin-top:82px;padding-left:34px}
.f11{width:389px;margin-right:10px}
.l11 a{color:#1a12d8;letter-spacing:-.25px;height:37px;border-bottom:2px solid #1a12d8}
.hscroll{height:30px;border-bottom:2px solid #8e9394;background:#cbd1d4;display:flex;align-items:center;padding:0 8px 0 10px}
.la,.ra{border:8px solid transparent}
.la{border-right:10px solid #555;border-left:0}
.ra{border-left:11px solid #555;border-right:0;margin-left:auto}
.ht{width:1104px;height:26px;margin-left:164px;border:1px solid #9a9fa1;background:linear-gradient(#e6e8e9,#d2d5d8);display:flex;align-items:center;justify-content:center}
.ht i{width:9px;height:8px;background:repeating-linear-gradient(90deg,#8b9092 0 1px,transparent 1px 3px)}
.status{flex:1;display:flex;background:#e4e6e7}
.status i{width:107px;border-right:1px solid #b0b4b6}
.status i:nth-child(3){width:118px}
.status svg{width:1093px;height:7px}

/* taskbar */
.taskbar{position:absolute;left:0;right:0;bottom:0;height:64px;display:flex;background:linear-gradient(90deg,#30362f,#33392e 40%,#3a412c)}
.app{height:64px;display:flex;align-items:center;justify-content:center}
.app svg{width:36px;height:36px}
.app.run{border-bottom:3px solid #74b1dc;padding-top:1px}
.start{width:76px}.start svg{width:27px;height:27px}
.a1{width:86px}.a1 svg{margin-top:-2px}
.a2{width:64px;margin-left:7px}.a3{width:66px;margin-left:15px;padding-right:4px}.a4{width:77px;margin-left:8px;padding-right:4px}.a5{width:64px;margin-left:10px}
.on.app{background:#545a54}
.tray{margin-left:auto;display:flex;color:#e6e9e0;font-size:18px}
.eng{width:66px;padding-left:13px;line-height:64px;letter-spacing:-.2px}
.clock{width:122px;margin:0 2px 0 -6px;display:flex;flex-direction:column;line-height:29px;padding-top:3px;text-align:center;letter-spacing:.1px}
.bdg{font:500 19px Roboto,sans-serif;fill:#f1f3ee}

/* overlays */
.cursor{position:absolute;left:1408px;top:951px;width:20px;height:30px}
.presenter{position:absolute;left:37px;top:30px;width:593px;font:500 37.500px/48px Roboto,sans-serif;color:#fff;letter-spacing:.55px;text-shadow:0 2px 8px rgba(0,0,0,.6)}
.recbadge{position:absolute;left:33px;top:22px;width:114px;height:73px;border-radius:16px;background:rgba(198,50,50,.93);color:#fff;font:38px/71px Roboto,sans-serif;text-align:center;letter-spacing:1px}
.dots{position:absolute;left:1980px;top:38px;display:flex;gap:5px;filter:drop-shadow(0 2px 2px rgba(0,0,0,.5))}
.dots i{width:12px;height:12px;border-radius:50%;background:#fff}
.tile{position:absolute;left:1612px;top:211px;width:391px;height:221px;border-radius:26px;background:#5f6368;display:flex;align-items:center;justify-content:center;color:#fff;font-family:Roboto,sans-serif}
.avatar{width:134px;height:134px;border-radius:50%;background:#689f38;font-size:72px;line-height:136px;text-align:center;padding-right:2px}
.tile span{position:absolute;left:37px;bottom:29px;font-size:37px;font-weight:500;line-height:44px;letter-spacing:.5px;text-shadow:0 2px 8px rgba(0,0,0,.6)}
.tile svg{position:absolute;right:18px;top:17px;width:56px;height:58px;filter:drop-shadow(0 2px 3px rgba(0,0,0,.5))}
.fab{position:absolute;left:1903px;top:929px;width:112px;height:112px;border-radius:50%;border:0;background:#fff;display:flex;align-items:center;justify-content:center}
.fab svg{width:40px;height:40px}
```
